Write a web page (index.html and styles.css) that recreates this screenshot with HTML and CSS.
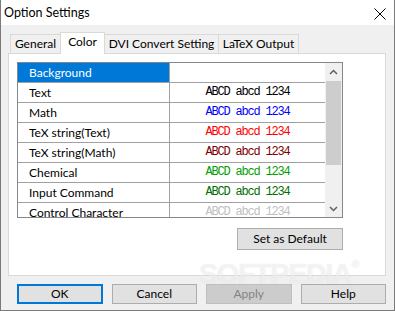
FILE: index.html
```html
<!DOCTYPE html>
<html lang="en">
<head>
    <meta charset="UTF-8">
    <title>Option Settings</title>
    <link rel="stylesheet" href="styles.css">
</head>
<body>
    <div class="window">
        <div class="titlebar">
            <span class="title">Option Settings</span>
            <svg class="close" width="12" height="12" viewBox="0 0 12 12">
                <path d="M0.5 0.5 L11.5 11.5 M11.5 0.5 L0.5 11.5" stroke="#000" stroke-width="1" fill="none"/>
            </svg>
        </div>

        <div class="client">
            <div class="tabs">
                <div class="tab tab-general">General</div>
                <div class="tab tab-color active">Color</div>
                <div class="tab tab-dvi">DVI Convert Setting</div>
                <div class="tab tab-latex">LaTeX Output</div>
            </div>

            <div class="panel">
                <div class="list">
                    <div class="rows">
                        <div class="row selected"><div class="name">Background</div><div class="sample"></div></div>
                        <div class="row"><div class="name">Text</div><div class="sample c-text">ABCD abcd 1234</div></div>
                        <div class="row"><div class="name">Math</div><div class="sample c-math">ABCD abcd 1234</div></div>
                        <div class="row"><div class="name">TeX string(Text)</div><div class="sample c-textex">ABCD abcd 1234</div></div>
                        <div class="row"><div class="name">TeX string(Math)</div><div class="sample c-mathtex">ABCD abcd 1234</div></div>
                        <div class="row"><div class="name">Chemical</div><div class="sample c-chem">ABCD abcd 1234</div></div>
                        <div class="row"><div class="name">Input Command</div><div class="sample c-input">ABCD abcd 1234</div></div>
                        <div class="row"><div class="name">Control Character</div><div class="sample c-control">ABCD abcd 1234</div></div>
                    </div>
                    <div class="scrollbar">
                        <div class="arrow">
                            <svg width="9" height="6" viewBox="0 0 9 6"><path d="M1 5 L4.5 1.5 L8 5" stroke="#606060" stroke-width="1.5" fill="none"/></svg>
                        </div>
                        <div class="track"><div class="thumb"></div></div>
                        <div class="arrow">
                            <svg width="9" height="6" viewBox="0 0 9 6"><path d="M1 1 L4.5 4.5 L8 1" stroke="#606060" stroke-width="1.5" fill="none"/></svg>
                        </div>
                    </div>
                </div>
                <div class="panel-actions">
                    <button class="btn btn-default">Set as Default</button>
                </div>
            </div>

            <div class="buttons">
                <button class="btn focused">OK</button>
                <button class="btn">Cancel</button>
                <button class="btn" disabled>Apply</button>
                <button class="btn">Help</button>
            </div>
        </div>

        <div class="watermark">SOFTPEDIA<span class="reg">®</span></div>
    </div>
</body>
</html>
```

FILE: styles.css
```css
body {
    margin: 0;
    font-family: Lato, "Noto Sans CJK JP", sans-serif;
    font-size: 12px;
    color: #000;
}
.window {
    position: relative;
    width: 395px;
    height: 311px;
    box-sizing: border-box;
    background-color: #f0f0f0;
    border: 1px solid #7a7a7a;
    border-top: none;
    overflow: hidden;
}
.titlebar {
    height: 25px;
    background-color: #fff;
    display: flex;
    align-items: center;
    justify-content: space-between;
    padding: 0 8px 0 3px;
}
.title {
    font-size: 12.5px;
}
.close {
    margin-top: 2px;
}
.client {
    padding: 7px 8px 0 7px;
}
.tabs {
    display: flex;
    align-items: flex-end;
    margin-left: 2px;
    height: 21px;
}
.tab {
    box-sizing: border-box;
    height: 19px;
    line-height: 18px;
    text-align: center;
    border: 1px solid #d9d9d9;
    border-bottom: none;
    background-color: #f0f0f0;
    margin-left: -1px;
}
.tab:first-child {
    margin-left: 0;
}
.tab.active {
    position: relative;
    z-index: 1;
    height: 22px;
    margin-bottom: -1px;
    line-height: 18px;
    background-color: #fff;
}
.tab-general { width: 51px; }
.tab-color { width: 45px; }
.tab-dvi { width: 115px; }
.tab-latex { width: 81px; }

.panel {
    box-sizing: border-box;
    height: 223px;
    background-color: #fff;
    border: 1px solid #d9d9d9;
    padding: 8px 8px 0 8px;
}
.list {
    width: 326px;
    height: 156px;
    box-sizing: border-box;
    border: 1px solid #828790;
    display: flex;
}
.rows {
    flex: 1;
    overflow: hidden;
}
.row {
    display: flex;
    height: 19px;
    border-bottom: 1px solid #a0a0a0;
}
.name {
    width: 152px;
    border-right: 1px solid #a0a0a0;
    padding-left: 11px;
    box-sizing: border-box;
    line-height: 19px;
    white-space: nowrap;
    overflow: hidden;
}
.row.selected .name {
    background-color: #0078d7;
    color: #fff;
}
.sample {
    flex: 1;
    text-align: center;
    line-height: 19px;
    font-family: "Liberation Mono", monospace;
    font-size: 12px;
    letter-spacing: -1.2px;
    white-space: nowrap;
}
.c-text { color: #000; }
.c-math { color: #0000ff; }
.c-textex { color: #ff0000; }
.c-mathtex { color: #800000; }
.c-chem { color: #00a000; }
.c-input { color: #007000; }
.c-control { color: #c0c0c0; }

.scrollbar {
    width: 17px;
    background-color: #f0f0f0;
    display: flex;
    flex-direction: column;
}
.arrow {
    height: 17px;
    display: flex;
    align-items: center;
    justify-content: center;
}
.track {
    flex: 1;
    padding-top: 1px;
}
.thumb {
    height: 84px;
    margin: 0 1px;
    background-color: #cdcdcd;
}
.panel-actions {
    width: 326px;
    display: flex;
    justify-content: flex-end;
    margin-top: 10px;
}
.btn {
    font-family: inherit;
    font-size: 12px;
    color: #000;
    background-color: #e1e1e1;
    border: 1px solid #adadad;
    border-radius: 0;
    padding: 0;
    height: 20px;
    width: 86px;
    line-height: 16px;
}
.btn-default {
    width: 106px;
    height: 22px;
}
.btn.focused {
    border: 2px solid #0078d7;
}
.btn:disabled {
    background-color: #cccccc;
    border-color: #bfbfbf;
    color: #838383;
}
.buttons {
    display: flex;
    gap: 9px;
    margin-top: 8px;
    padding-left: 9px;
}
.watermark {
    position: absolute;
    left: 198px;
    top: 258px;
    font-family: "Liberation Sans", sans-serif;
    font-weight: bold;
    font-size: 29px;
    letter-spacing: -1.5px;
    color: rgba(255, 255, 255, 0.6);
    text-shadow: 0 0 1px rgba(0, 0, 0, 0.12);
    pointer-events: none;
}
.reg {
    font-size: 11px;
    vertical-align: top;
    letter-spacing: 0;
}
```
